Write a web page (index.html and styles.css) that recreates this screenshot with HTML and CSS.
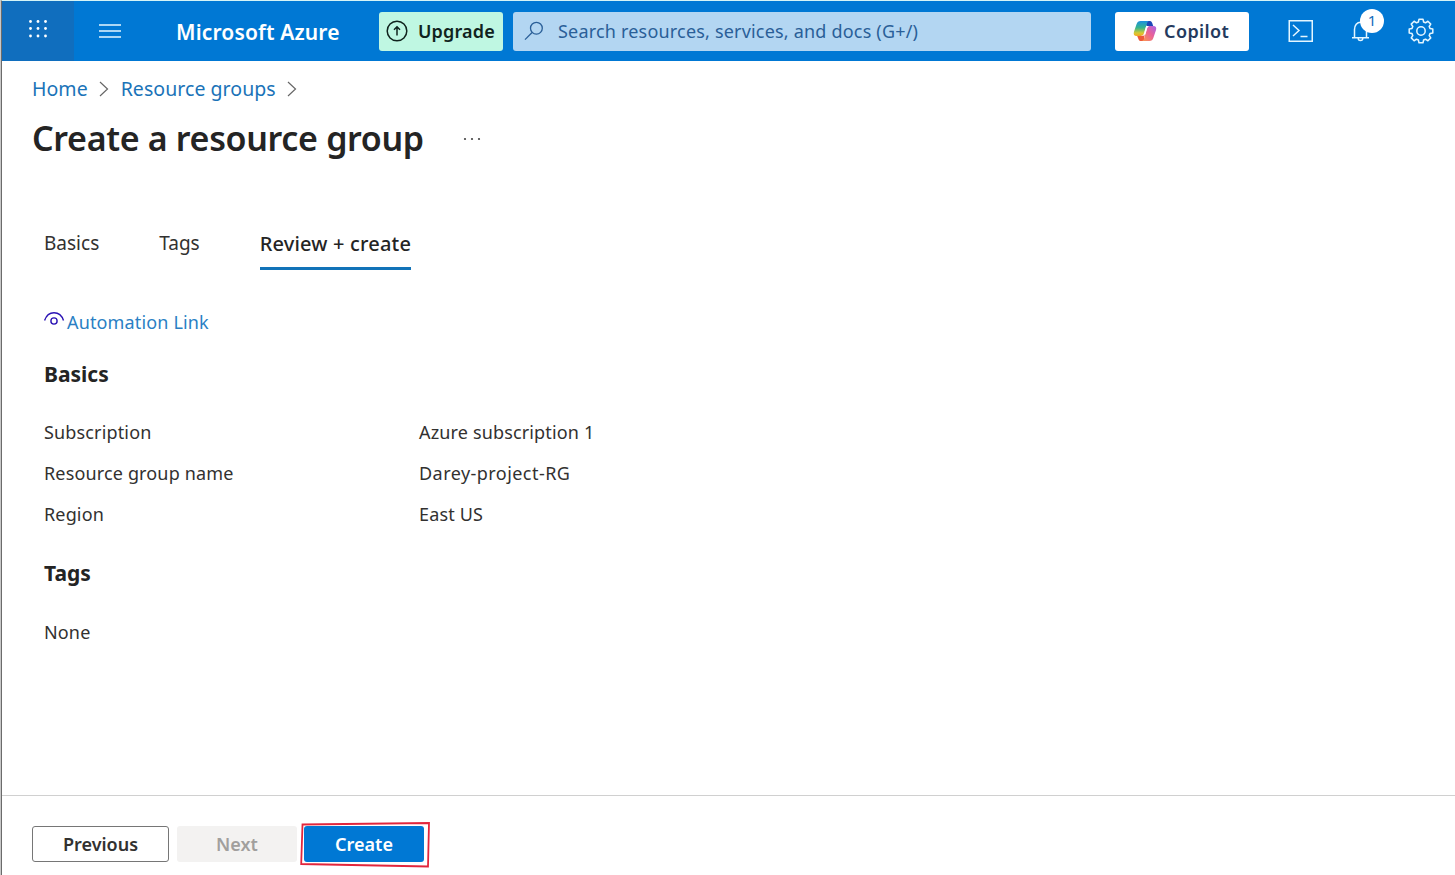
FILE: index.html
```html
<!DOCTYPE html>
<html lang="en">
<head>
<meta charset="utf-8">
<title>Create a resource group - Microsoft Azure</title>
<link rel="stylesheet" href="styles.css">
</head>
<body>
<div class="portal">
  <header class="topbar">
    <button class="launcher" aria-label="App launcher">
      <svg width="20" height="20" viewBox="0 0 20 20" fill="#fff"><circle cx="2.5" cy="2.5" r="1.4"/><circle cx="10" cy="2.5" r="1.4"/><circle cx="17.5" cy="2.5" r="1.4"/><circle cx="2.5" cy="9.5" r="1.4"/><circle cx="10" cy="9.5" r="1.4"/><circle cx="17.5" cy="9.5" r="1.4"/><circle cx="2.5" cy="17" r="1.4"/><circle cx="10" cy="17" r="1.4"/><circle cx="17.5" cy="17" r="1.4"/></svg>
    </button>
    <button class="menu" aria-label="Show portal menu">
      <svg width="22" height="14" viewBox="0 0 22 14" stroke="#e4f6ff" stroke-width="1.5"><path d="M0 1h22M0 7h22M0 13h22"/></svg>
    </button>
    <a class="brand">Microsoft Azure</a>
    <button class="upgrade">
      <svg width="22" height="22" viewBox="0 0 22 22" fill="none" stroke="#10231d" stroke-width="1.5"><circle cx="11" cy="11" r="9.8"/><path d="M11 15.500V7M8 9.800l3-3 3 3"/></svg>
      <span>Upgrade</span>
    </button>
    <div class="search">
      <svg width="20" height="20" viewBox="0 0 20 20" fill="none" stroke="#2a5f98" stroke-width="1.3"><circle cx="12.4" cy="7.2" r="5.9"/><path d="M8.1 11.5L1 18.6"/></svg>
      <span>Search resources, services, and docs (G+/)</span>
    </div>
    <button class="copilot">
      <svg width="24" height="22" viewBox="0 0 24 22">
        <defs>
          <linearGradient id="cpA" x1="0" y1="0" x2="0" y2="1"><stop offset="0" stop-color="#1b8fe0"/><stop offset=".45" stop-color="#35b58c"/><stop offset=".8" stop-color="#d8c932"/><stop offset="1" stop-color="#f5a623"/></linearGradient>
          <linearGradient id="cpB" x1="1" y1="0" x2="0" y2="1"><stop offset="0" stop-color="#a565e8"/><stop offset=".45" stop-color="#e9609a"/><stop offset="1" stop-color="#fb9a4b"/></linearGradient>
        </defs>
        <path d="M14 1h3c1.300 0 1.900 1 2.300 2.300L20.200 6h-5.500c-1.200 0-1.700-.6-1.900-1.800z" fill="#1d47b8"/>
        <path d="M7.600 1h8.600c-1.300.3-1.900 1.300-2.400 3l-2.700 9c-.6 2-1.500 3-3.400 3H3.600C1.300 16 .2 14.400.9 12L3.600 4C4.300 2 5.500 1 7.600 1z" fill="url(#cpA)"/>
        <path d="M4.200 16h3.600c2 0 2.800-1 3.400-3l.8-2.600L11 20.500c-.5.4-1 .5-1.600.5H8c-1.500 0-2.200-.8-2.700-2.300z" fill="#ee5a3a"/>
        <path d="M16.400 6h4c2.300 0 3.300 1.600 2.700 3.800l-2.700 8c-.7 2.200-1.900 3.200-4 3.200H9c1.300-.4 1.800-1.400 2.300-3l2.500-8.800c.6-2.200 1-3.200 2.600-3.200z" fill="url(#cpB)"/>
        <path d="M13.200 6h3.200c-1.500.2-2 1.300-2.500 3.100l-1.100 3.700c-.6 2-1.500 3.200-3.800 3.200H7.800c1.900-.1 2.800-1.100 3.300-3z" fill="#fff"/>
      </svg>
      <span>Copilot</span>
    </button>
    <nav class="tools">
      <svg width="26" height="22" viewBox="0 0 26 22" fill="none" stroke="#e4f6ff" stroke-width="1.5"><path d="M1.250 .75h23v20.500h-23zM5 5l6 5.500L5 16M12.500 16.500h7"/></svg>
      <div class="bell">
        <svg width="20" height="22" viewBox="0 0 20 22" fill="none" stroke="#e4f6ff" stroke-width="1.500"><path d="M1 17.800h17M3.500 17.500V9.500c0-4.200 2.600-7.300 6-7.300s6 3.100 6 7.300v8M7.200 18.200c0 3 4.600 3 4.600 0"/></svg>
        <span class="badge">1</span>
      </div>
      <svg class="gear" width="26" height="26" viewBox="0 0 26 26" fill="none" stroke="#e4f6ff" stroke-width="1.500" stroke-linejoin="round"><circle cx="13" cy="13" r="4.200"/><path d="M10.400 4L11 1.200h4l.6 2.800 1.900.8 2.400-1.550 2.850 2.850L21.200 8.500l.8 1.900 2.800.6v4l-2.800.6-.8 1.900 1.550 2.400-2.850 2.850-2.400-1.550-1.900.8-.6 2.800h-4l-.6-2.800-1.900-.8-2.400 1.550L3.250 19.900l1.550-2.400-.8-1.900-2.800-.6v-4l2.800-.6.8-1.900L3.250 6.100 6.100 3.250 8.500 4.800z"/></svg>
    </nav>
  </header>

  <main class="content">
    <nav class="crumbs">
      <a>Home</a>
      <svg width="10" height="16" viewBox="0 0 10 16" fill="none" stroke="#666" stroke-width="1.2"><path d="M1 1l7.500 7L1 15"/></svg>
      <a>Resource groups</a>
      <svg width="10" height="16" viewBox="0 0 10 16" fill="none" stroke="#666" stroke-width="1.2"><path d="M1 1l7.500 7L1 15"/></svg>
    </nav>
    <div class="heading">
      <h1>Create a resource group</h1>
      <svg width="18" height="4" viewBox="0 0 18 4" fill="#444"><circle cx="2" cy="2" r="1.100"/><circle cx="9" cy="2" r="1.100"/><circle cx="16" cy="2" r="1.100"/></svg>
    </div>
    <div class="tabs">
      <a>Basics</a>
      <a>Tags</a>
      <a class="active">Review + create</a>
    </div>
    <a class="automation">
      <svg width="22" height="18" viewBox="0 0 22 18" fill="none" stroke="#2a12b4" stroke-width="1.400"><path d="M.6 9.500C2.200 4.700 5.600 1.800 10 1.800s7.900 2.900 9.500 7.700"/><circle cx="10" cy="10" r="3.100"/></svg>
      <span>Automation Link</span>
    </a>
    <section class="basics">
      <h2>Basics</h2>
      <dl class="details">
        <dt>Subscription</dt><dd>Azure subscription 1</dd>
        <dt>Resource group name</dt><dd class="group-name">Darey-project-RG</dd>
        <dt>Region</dt><dd>East US</dd>
      </dl>
    </section>
    <section class="tags">
      <h2>Tags</h2>
      <p>None</p>
    </section>
  </main>

  <footer class="actions">
    <button class="btn previous">Previous</button>
    <button class="btn next" disabled>Next</button>
    <button class="btn create">Create
      <svg class="marker" width="130" height="46" viewBox="0 0 130 46" fill="none" stroke="#e2263c" stroke-width="1.800"><path d="M2.500 2.500L129 1l-1 43.500L1.200 42z"/></svg>
    </button>
  </footer>
</div>
</body>
</html>
```

FILE: styles.css
```css
* { box-sizing: border-box; }

body {
  margin: 0;
  font-family: "Noto Sans", "Open Sans", sans-serif;
  font-size: 18px;
  letter-spacing: .15px;
  color: #323130;
  background: #fff;
}

button {
  margin: 0;
  padding: 0;
  border: 0;
  background: none;
  font: inherit;
  letter-spacing: inherit;
  color: inherit;
}

h1, h2, p, dl, dd { margin: 0; }
svg { display: block; flex: none; }

.portal {
  height: 875px;
  overflow: hidden;
  display: flex;
  flex-direction: column;
  border-left: 1px solid #6b6b6b;
  border-top: 1px solid #d5f4f7;
  margin-left: 1px;
  box-shadow: -1px 0 #c8c8c8;
  white-space: nowrap;
}

.topbar {
  height: 60px;
  flex: none;
  display: flex;
  align-items: center;
  background: #0078d4;
  color: #fff;
}

.launcher {
  width: 72px;
  height: 60px;
  padding: 0 0 4px 26px;
  background: #106ebe;
}

.menu { width: 72px; padding-left: 25px; }

.brand {
  width: 202px;
  padding: 2px 0 0 30px;
  font-size: 21px;
  font-weight: 600;
}

.upgrade, .search, .copilot {
  height: 39px;
  display: flex;
  align-items: center;
  border-radius: 3px;
}

.upgrade {
  width: 124px;
  margin-left: 31px;
  padding-left: 7px;
  gap: 10px;
  background: #bff7e2;
  color: #10231d;
  font-weight: 600;
}

.search {
  width: 578px;
  margin-left: 10px;
  padding-left: 11px;
  gap: 14px;
  letter-spacing: .19px;
  background: #b3d6f2;
  color: #2a5f98;
}

.copilot {
  width: 134px;
  margin-left: 24px;
  padding-left: 18px;
  gap: 7px;
  letter-spacing: .4px;
  background: #fff;
  color: #243a5e;
  font-weight: 600;
}

.tools { display: flex; align-items: center; margin-left: 39px; }
.bell { position: relative; margin-left: 37px; }
.gear { margin-left: 37px; }

.badge {
  position: absolute;
  left: 9px;
  top: -11px;
  width: 24px;
  height: 24px;
  border-radius: 50%;
  background: #fff;
  color: #0f6cbd;
  font-size: 15px;
  line-height: 22px;
  text-align: center;
}

.content { flex: 1; padding-left: 30px; }

.crumbs {
  display: flex;
  align-items: center;
  gap: 11.500px;
  height: 28px;
  margin-top: 14px;
  font-size: 19.5px;
  line-height: 28px;
  letter-spacing: .05px;
  color: #1a73b8;
}

.heading { display: flex; align-items: center; height: 50px; margin-top: 10px; }
.heading svg { margin: 2px 0 0 39px; }

h1 {
  font-size: 34px;
  font-weight: 600;
  line-height: 50px;
  letter-spacing: -.33px;
  color: #242424;
}

.tabs {
  display: flex;
  align-items: flex-start;
  gap: 60px;
  margin: 67px 0 0 12px;
  height: 40px;
  font-size: 19px;
  line-height: 26px;
  letter-spacing: 0;
}

.active {
  height: 40px;
  padding-top: 1px;
  border-bottom: 3px solid #1273b8;
  font-size: 20px;
  font-weight: 500;
  letter-spacing: .18px;
  color: #242424;
}

.automation {
  display: flex;
  align-items: center;
  gap: 1px;
  height: 26px;
  margin: 39px 0 0 12px;
  line-height: 26px;
  color: #2a7fc4;
}

.automation svg { margin-bottom: 5px; }

.basics, .tags { margin-left: 12px; }
.basics { margin-top: 24px; }
.tags { margin-top: 23px; }

h2 {
  font-size: 21px;
  font-weight: 700;
  line-height: 30px;
  letter-spacing: 0;
  color: #242424;
}

.details {
  display: grid;
  grid-template-columns: 375px 1fr;
  margin-top: 23px;
  line-height: 41px;
}

.group-name { letter-spacing: .45px; }
.tags p { margin-top: 32px; }

.actions {
  height: 80px;
  flex: none;
  display: flex;
  align-items: flex-start;
  padding: 30px 0 0 30px;
  border-top: 1px solid #d0d0d0;
}

.btn {
  width: 120px;
  height: 36px;
  border-radius: 3px;
  font-weight: 600;
  letter-spacing: 0;
  text-align: center;
}

.previous { width: 137px; border: 1px solid #767676; }
.next { margin-left: 8px; background: #f3f2f1; color: #a19f9d; }
.create { position: relative; margin-left: 7px; background: #0078d4; color: #fff; }
.marker { position: absolute; left: -4px; top: -4px; }
```
